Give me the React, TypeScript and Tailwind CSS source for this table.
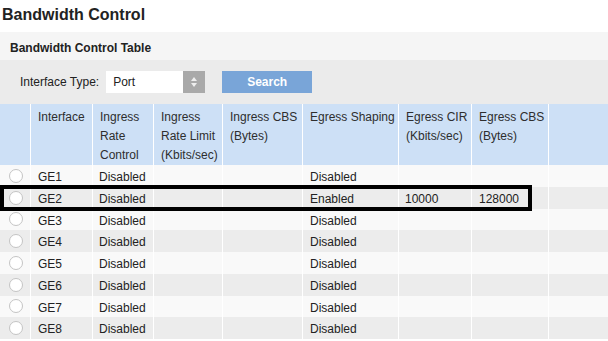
import React from 'react';

const columns = [
  { key: 'sel', width: 'w-[31px]', label: [] as string[] },
  { key: 'iface', width: 'w-[62px]', label: ['Interface'] },
  { key: 'irc', width: 'w-[61px]', label: ['Ingress', 'Rate', 'Control'] },
  { key: 'irl', width: 'w-[69px]', label: ['Ingress', 'Rate Limit', '(Kbits/sec)'] },
  { key: 'icbs', width: 'w-[80px]', label: ['Ingress CBS', '(Bytes)'] },
  { key: 'es', width: 'w-[96px]', label: ['Egress Shaping'] },
  { key: 'ecir', width: 'w-[73px]', label: ['Egress CIR', '(Kbits/sec)'] },
  { key: 'ecbs', width: 'w-[77px]', label: ['Egress CBS', '(Bytes)'] },
];

const rows = [
  { name: 'GE1', irc: 'Disabled', es: 'Disabled', cir: '', cbs: '' },
  { name: 'GE2', irc: 'Disabled', es: 'Enabled', cir: '10000', cbs: '128000' },
  { name: 'GE3', irc: 'Disabled', es: 'Disabled', cir: '', cbs: '' },
  { name: 'GE4', irc: 'Disabled', es: 'Disabled', cir: '', cbs: '' },
  { name: 'GE5', irc: 'Disabled', es: 'Disabled', cir: '', cbs: '' },
  { name: 'GE6', irc: 'Disabled', es: 'Disabled', cir: '', cbs: '' },
  { name: 'GE7', irc: 'Disabled', es: 'Disabled', cir: '', cbs: '' },
  { name: 'GE8', irc: 'Disabled', es: 'Disabled', cir: '', cbs: '' },
];

function Radio() {
  return <span className="block w-[14px] h-[14px] rounded-full border border-[#c4c4c4] bg-white" />;
}

export default function App() {
  return (
    <div className="w-[608px] h-[341px] overflow-hidden bg-white text-[12px] text-[#222]" style={{ fontFamily: '"Liberation Sans", Arial, sans-serif' }}>
      <h1 className="h-[32px] pl-[2px] pt-[5px] text-[16px] font-bold leading-[20px] text-[#222]">Bandwidth Control</h1>

      <div className="h-[28px] bg-[#f5f5f5] pl-[10px] pt-[9px] font-bold leading-[14px]">Bandwidth Control Table</div>

      <div className="h-[44px] bg-[#ebebeb] flex items-start pt-[11px] pl-[20px]">
        <span className="leading-[22px] mr-[7px]">Interface Type:</span>
        <div className="flex w-[99px] h-[22px] bg-white">
          <span className="flex-1 pl-[7px] leading-[22px]">Port</span>
          <span className="w-[22px] bg-[#a9a9a9] flex flex-col items-center justify-center gap-[2px]">
            <svg width="6" height="4" viewBox="0 0 6 4"><path d="M0 4 L3 0 L6 4 Z" fill="#eee" /></svg>
            <svg width="6" height="4" viewBox="0 0 6 4"><path d="M0 0 L3 4 L6 0 Z" fill="#eee" /></svg>
          </span>
        </div>
        <button className="ml-[17px] w-[90px] h-[22px] bg-[#79a5d8] text-white font-bold leading-[22px]">Search</button>
      </div>

      <div className="relative">
        <div className="flex h-[61px] bg-[#cde0f6] text-[#2e2e2e]">
          {columns.map((c) => (
            <div key={c.key} className={`${c.width} shrink-0 border-r border-white pl-[7px] pt-[4px] leading-[19px] whitespace-nowrap`}>
              {c.label.map((l) => (
                <div key={l}>{l}</div>
              ))}
            </div>
          ))}
          <div className="flex-1" />
        </div>

        {rows.map((r, i) => (
          <div key={r.name} className={`flex h-[21.75px] leading-[24px] overflow-hidden ${i % 2 === 0 ? 'bg-[#f9f9f9]' : 'bg-[#ececec]'}`}>
            <div className="w-[31px] shrink-0 border-r border-white flex items-center pl-[9px]"><Radio /></div>
            <div className="w-[62px] shrink-0 border-r border-white pl-[7px]">{r.name}</div>
            <div className="w-[61px] shrink-0 border-r border-white pl-[6px]">{r.irc}</div>
            <div className="w-[69px] shrink-0 border-r border-white" />
            <div className="w-[80px] shrink-0 border-r border-white" />
            <div className="w-[96px] shrink-0 border-r border-white pl-[7px]">{r.es}</div>
            <div className="w-[73px] shrink-0 border-r border-white pl-[6px]">{r.cir}</div>
            <div className="w-[77px] shrink-0 border-r border-white pl-[7px]">{r.cbs}</div>
            <div className="flex-1" />
          </div>
        ))}

        {/* selected row outline */}
        <div className="absolute left-0 top-[81px] w-[532px] h-[26px] border-[4px] border-black pointer-events-none" />
      </div>
    </div>
  );
}
